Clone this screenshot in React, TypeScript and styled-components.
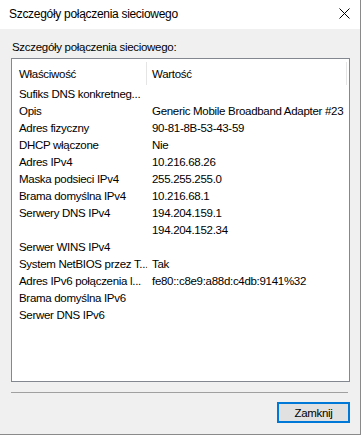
import React from "react";
import styled, { createGlobalStyle } from "styled-components";

// styled-components
//--------------------------
const GlobalStyle = createGlobalStyle`
  html, body {
    margin: 0;
    padding: 0;
    background: #ffffff;
  }
  * {
    box-sizing: border-box;
  }
`;

const Window = styled.div`
  width: 361px;
  height: 435px;
  display: flex;
  flex-direction: column;
  border-right: 1px solid #8a8a8a;
  border-bottom: 1px solid #8a8a8a;
  font-family: "Liberation Sans", Arial, sans-serif;
  font-size: 11.5px;
  letter-spacing: -0.3px;
  color: #000;
`;

const TitleBar = styled.div`
  height: 29px;
  flex: none;
  display: flex;
  align-items: center;
  justify-content: space-between;
  padding: 0 10px 1px 9px;
  background: #ffffff;
  font-size: 12px;
`;

const CloseIcon = styled.svg`
  width: 11px;
  height: 11px;
  margin-bottom: 1px;
`;

const Body = styled.div`
  flex: 1;
  display: flex;
  flex-direction: column;
  background: #f0f0f0;
  padding: 11px 11px 0 11px;
`;

const GroupLabel = styled.div`
  height: 18px;
  line-height: 14px;
  padding-left: 1px;
`;

const ListBox = styled.div`
  width: 339px;
  height: 324px;
  background: #ffffff;
  border: 1px solid #828790;
  display: flex;
  flex-direction: column;
`;

const Header = styled.div`
  height: 27px;
  display: grid;
  grid-template-columns: 135px 200px;
  padding-top: 3px;
`;

const HeaderCell = styled.div<{ $pad: number }>`
  padding-left: ${(p) => p.$pad}px;
  border-right: 1px solid #e5e5e5;
  display: flex;
  align-items: center;
  height: 23px;
`;

const Rows = styled.div`
  display: grid;
  grid-template-columns: 135px 1fr;
  grid-auto-rows: 17px;
`;

const Cell = styled.div<{ $pad: number }>`
  padding-left: ${(p) => p.$pad}px;
  line-height: 17px;
  white-space: nowrap;
  overflow: hidden;
`;

const Separator = styled.div`
  width: 337px;
  height: 1px;
  margin-top: 10px;
  background: #a0a0a0;
`;

const Footer = styled.div`
  display: flex;
  justify-content: flex-end;
  width: 339px;
  padding-top: 9px;
`;

const Button = styled.button`
  width: 73px;
  height: 21px;
  background: #e1e1e1;
  border: 2px solid #0078d7;
  font-family: "Liberation Sans", Arial, sans-serif;
  font-size: 11.5px;
  letter-spacing: -0.3px;
  color: #000;
  padding: 0;
`;

//--------------------------

const rows: [string, string][] = [
  ["Sufiks DNS konkretneg...", ""],
  ["Opis", "Generic Mobile Broadband Adapter #23"],
  ["Adres fizyczny", "90-81-8B-53-43-59"],
  ["DHCP włączone", "Nie"],
  ["Adres IPv4", "10.216.68.26"],
  ["Maska podsieci IPv4", "255.255.255.0"],
  ["Brama domyślna IPv4", "10.216.68.1"],
  ["Serwery DNS IPv4", "194.204.159.1"],
  ["", "194.204.152.34"],
  ["Serwer WINS IPv4", ""],
  ["System NetBIOS przez T...", "Tak"],
  ["Adres IPv6 połączenia l...", "fe80::c8e9:a88d:c4db:9141%32"],
  ["Brama domyślna IPv6", ""],
  ["Serwer DNS IPv6", ""],
];

const App = () => {
  return (
    <>
      <GlobalStyle />
      <Window>
        <TitleBar>
          <span>Szczegóły połączenia sieciowego</span>
          <CloseIcon viewBox="0 0 11 11">
            <path d="M0.5 0.5 L10.5 10.5 M10.5 0.5 L0.5 10.5" stroke="#000" strokeWidth="1" fill="none" />
          </CloseIcon>
        </TitleBar>
        <Body>
          <GroupLabel>Szczegóły połączenia sieciowego:</GroupLabel>
          <ListBox>
            <Header>
              <HeaderCell $pad={7}>Właściwość</HeaderCell>
              <HeaderCell $pad={5}>Wartość</HeaderCell>
            </Header>
            <Rows>
              {rows.map(([name, value], i) => (
                <React.Fragment key={i}>
                  <Cell $pad={7}>{name}</Cell>
                  <Cell $pad={5}>{value}</Cell>
                </React.Fragment>
              ))}
            </Rows>
          </ListBox>
          <Separator />
          <Footer>
            <Button type="button">Zamknij</Button>
          </Footer>
        </Body>
      </Window>
    </>
  );
};

export default App;
